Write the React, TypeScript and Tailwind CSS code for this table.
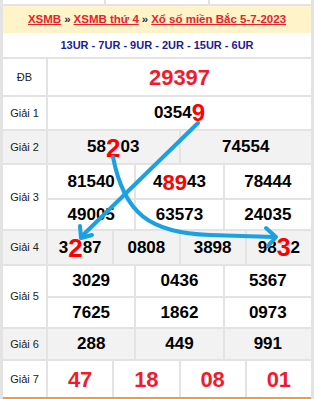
import React from "react";

const B = "border-[#e3e3e3]";

function Cells({ items, big }: { items: React.ReactNode[]; big?: boolean }) {
  return (
    <div className="flex flex-1 h-full">
      {items.map((it, i) => (
        <div
          key={i}
          className={`flex-1 flex items-center justify-center font-bold ${
            big ? "text-[22px] text-[#ee1c2e]" : "text-[17px] text-black"
          } ${i > 0 ? "border-l-2 " + B : ""}`}
        >
          {it}
        </div>
      ))}
    </div>
  );
}

function Label({ children }: { children: React.ReactNode }) {
  return (
    <div className={`w-[45px] shrink-0 border-r-2 ${B} flex items-center justify-center text-[11px] text-[#222]`}>
      {children}
    </div>
  );
}

const R = ({ c, s }: { c: string; s: string }) => (
  <span className={`text-[#ff0000] ${s} leading-none`}>{c}</span>
);

export default function App() {
  return (
    <div className="relative w-[314px] h-[399px] overflow-hidden bg-white font-['Liberation_Sans',Arial,sans-serif]">
      <div className={`h-full border-l-[3px] border-r-[3px] ${B} flex flex-col`}>
        {/* partial previous row */}
        <div className={`h-[6px] shrink-0 flex border-b-2 ${B}`}>
          <div className="flex-1" />
          <div className={`flex-1 border-l-2 ${B}`} />
          <div className={`flex-1 border-l-2 ${B}`} />
        </div>
        {/* header */}
        <div className="h-[27px] shrink-0 bg-[#fff3c9] flex items-center justify-center text-[11.5px] font-bold whitespace-nowrap">
          <span className="text-[#e8212a] underline">XSMB</span>
          <span className="text-[#333] mx-[3px]">»</span>
          <span className="text-[#e8212a] underline">XSMB thứ 4</span>
          <span className="text-[#333] mx-[3px]">»</span>
          <span className="text-[#e8212a] underline">Xổ số miền Bắc 5-7-2023</span>
        </div>
        {/* codes */}
        <div className={`h-[26px] shrink-0 border-b-2 ${B} flex items-center justify-center text-[11px] font-bold text-[#1c1c96]`}>
          13UR - 7UR - 9UR - 2UR - 15UR - 6UR
        </div>
        {/* DB */}
        <div className={`h-[38px] shrink-0 flex border-b-2 ${B}`}>
          <Label>ĐB</Label>
          <Cells big items={["29397"]} />
        </div>
        {/* G1 */}
        <div className={`h-[34px] shrink-0 flex border-b-2 ${B}`}>
          <Label>Giải 1</Label>
          <Cells
            items={[
              <span className="flex items-end">
                0354<R c="9" s="text-[24px] mb-[1px]" />
              </span>,
            ]}
          />
        </div>
        {/* G2 */}
        <div className={`h-[34px] shrink-0 flex border-b-2 ${B} bg-[#f2f2f2]`}>
          <Label>Giải 2</Label>
          <Cells
            items={[
              <span className="flex items-end">
                58<R c="2" s="text-[26px] mb-[-1px]" />03
              </span>,
              "74554",
            ]}
          />
        </div>
        {/* G3 */}
        <div className={`h-[66px] shrink-0 flex border-b-2 ${B}`}>
          <Label>Giải 3</Label>
          <div className="flex-1 flex flex-col">
            <div className={`h-[35px] border-b-2 ${B}`}>
              <Cells
                items={[
                  "81540",
                  <span className="flex items-end">
                    4<R c="89" s="text-[22px]" />43
                  </span>,
                  "78444",
                ]}
              />
            </div>
            <div className="flex-1">
              <Cells items={["49005", "63573", "24035"]} />
            </div>
          </div>
        </div>
        {/* G4 */}
        <div className={`h-[35px] shrink-0 flex border-b-2 ${B} bg-[#f2f2f2]`}>
          <Label>Giải 4</Label>
          <Cells
            items={[
              <span className="flex items-end">
                3<R c="2" s="text-[26px] mb-[-1px]" />87
              </span>,
              "0808",
              "3898",
              <span className="flex items-end">
                98<R c="3" s="text-[25px]" />2
              </span>,
            ]}
          />
        </div>
        {/* G5 */}
        <div className={`h-[63px] shrink-0 flex border-b-2 ${B}`}>
          <Label>Giải 5</Label>
          <div className="flex-1 flex flex-col">
            <div className={`h-[32px] border-b-2 ${B}`}>
              <Cells items={["3029", "0436", "5367"]} />
            </div>
            <div className="flex-1">
              <Cells items={["7625", "1862", "0973"]} />
            </div>
          </div>
        </div>
        {/* G6 */}
        <div className={`h-[32px] shrink-0 flex border-b-2 ${B} bg-[#f2f2f2]`}>
          <Label>Giải 6</Label>
          <Cells items={["288", "449", "991"]} />
        </div>
        {/* G7 */}
        <div className="h-[38px] shrink-0 flex border-b-2 border-[#f39a3c]">
          <Label>Giải 7</Label>
          <Cells big items={["47", "18", "08", "01"]} />
        </div>
      </div>
      <svg
        className="absolute left-0 top-0 pointer-events-none"
        width="314"
        height="399"
        viewBox="0 0 314 399"
        fill="none"
        stroke="#1ba1e2"
        strokeWidth="4"
        strokeLinecap="round"
        strokeLinejoin="round"
      >
        <path d="M198 123 L82 236" />
        <path d="M80 226 L81 238 L92 235" />
        <path d="M113 157 C124 214 150 233 210 235 L274 237" />
        <path d="M266 228 L276 237 L268 246" />
      </svg>
    </div>
  );
}
